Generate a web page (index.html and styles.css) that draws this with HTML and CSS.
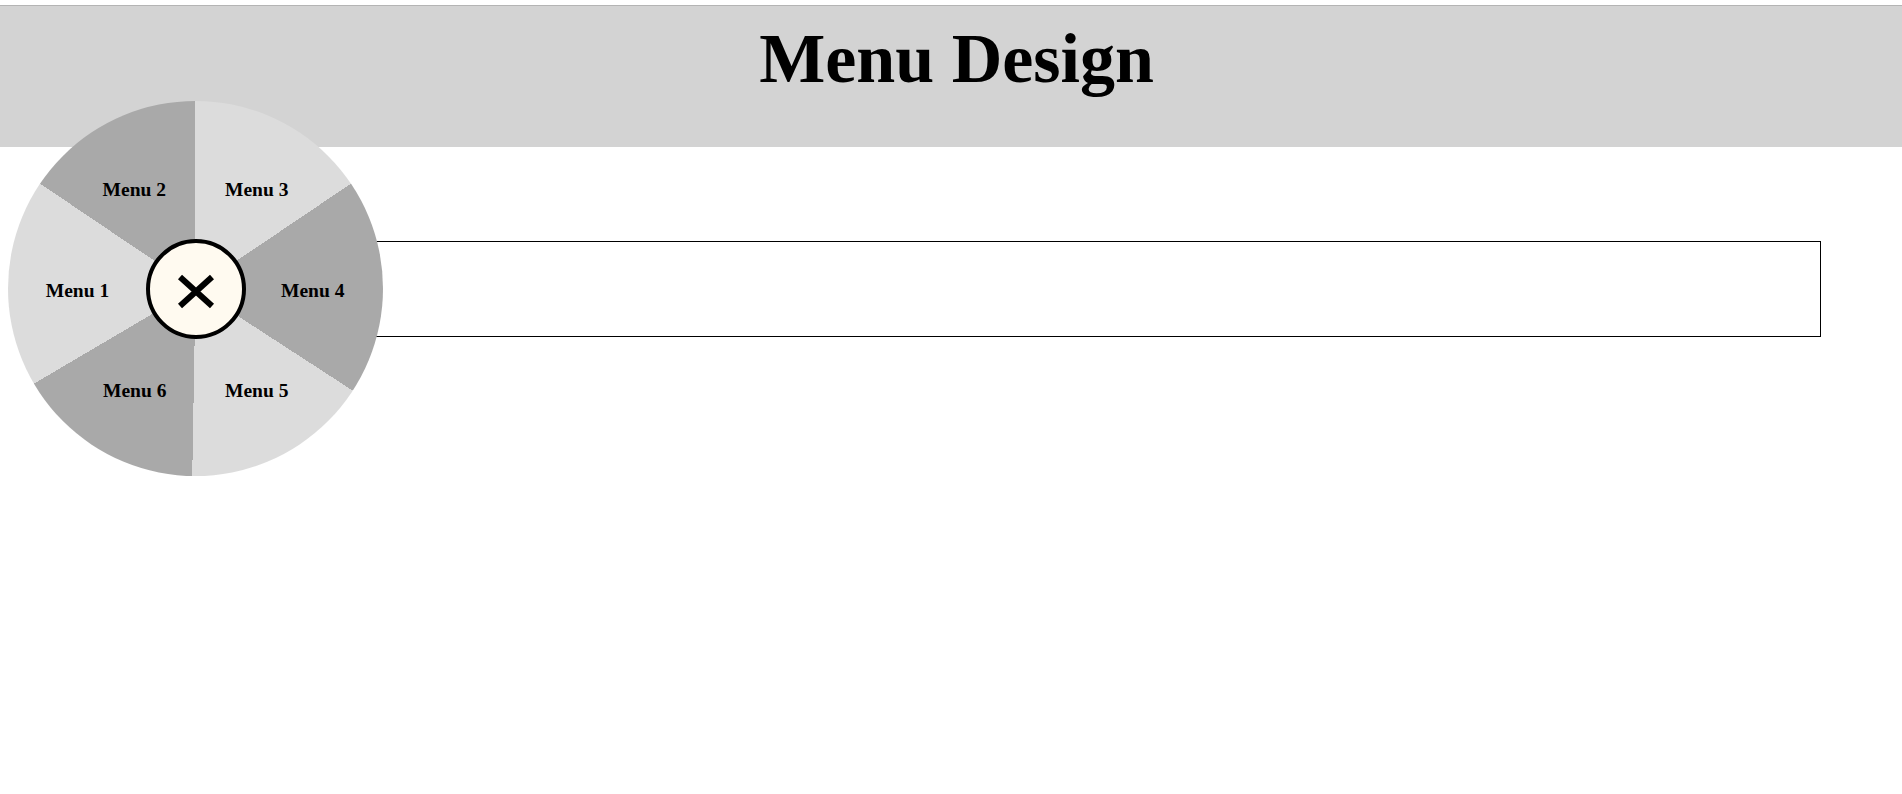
FILE: index.html
```html
<!DOCTYPE html>
<html>
<head>
<meta charset="utf-8">
<title>Menu Design</title>
<link rel="stylesheet" href="styles.css">
</head>
<body>
<header class="header">
  <h1 class="title">Menu Design</h1>
</header>
<main class="main">
  <div class="box"></div>
</main>
<nav class="wheel">
  <span class="label l1">Menu 1</span>
  <span class="label l2">Menu 2</span>
  <span class="label l3">Menu 3</span>
  <span class="label l4">Menu 4</span>
  <span class="label l5">Menu 5</span>
  <span class="label l6">Menu 6</span>
  <button class="close" type="button" aria-label="Close">
    <svg width="38" height="35" viewBox="0 0 38 35"><path d="M3 3 L35 32 M35 3 L3 32" stroke="#000" stroke-width="6" fill="none"/></svg>
  </button>
</nav>
</body>
</html>
```
FILE: styles.css
```css
html, body {
  margin: 0;
  padding: 0;
  background: #fff;
}
body {
  padding-top: 5px;
  font-family: "Liberation Serif", "Times New Roman", serif;
  color: #000;
}
.header {
  border-top: 1px solid #b4b4b4;
  background: #d3d3d3;
  height: 142px;
  padding-top: 18px;
  box-sizing: border-box;
}
.title {
  margin: 0;
  padding-left: 11px;
  text-align: center;
  font-size: 70px;
  line-height: 70px;
  font-weight: bold;
}
.main {
  padding-top: 94px;
}
.box {
  margin-left: 196px;
  margin-right: 81px;
  height: 94px;
  border: 1px solid #000;
}
.wheel {
  position: absolute;
  left: 8px;
  top: 101px;
  width: 375px;
  height: 375px;
  border-radius: 50%;
  background: conic-gradient(#dcdcdc 0deg 56deg, #a9a9a9 56deg 123deg, #dcdcdc 123deg 181deg, #a9a9a9 181deg 239.5deg, #dcdcdc 239.5deg 304deg, #a9a9a9 304deg 360deg);
  display: grid;
  place-items: center;
}
.label {
  position: absolute;
  transform: translate(-50%, -50%);
  font-size: 19.5px;
  line-height: 19.5px;
  font-weight: bold;
  white-space: nowrap;
}
.l1 { left: 69.5px; top: 190px; }
.l2 { left: 126.3px; top: 88.5px; }
.l3 { left: 248.7px; top: 88.5px; }
.l4 { left: 304.7px; top: 190px; }
.l5 { left: 248.7px; top: 290px; }
.l6 { left: 126.7px; top: 290px; }
.close {
  width: 100px;
  height: 100px;
  box-sizing: border-box;
  border: 4px solid #000;
  border-radius: 50%;
  background: #fffaf0;
  padding: 6px 0 0 0;
  margin: 0;
  display: flex;
  align-items: center;
  justify-content: center;
}
.close svg {
  display: block;
}
```
